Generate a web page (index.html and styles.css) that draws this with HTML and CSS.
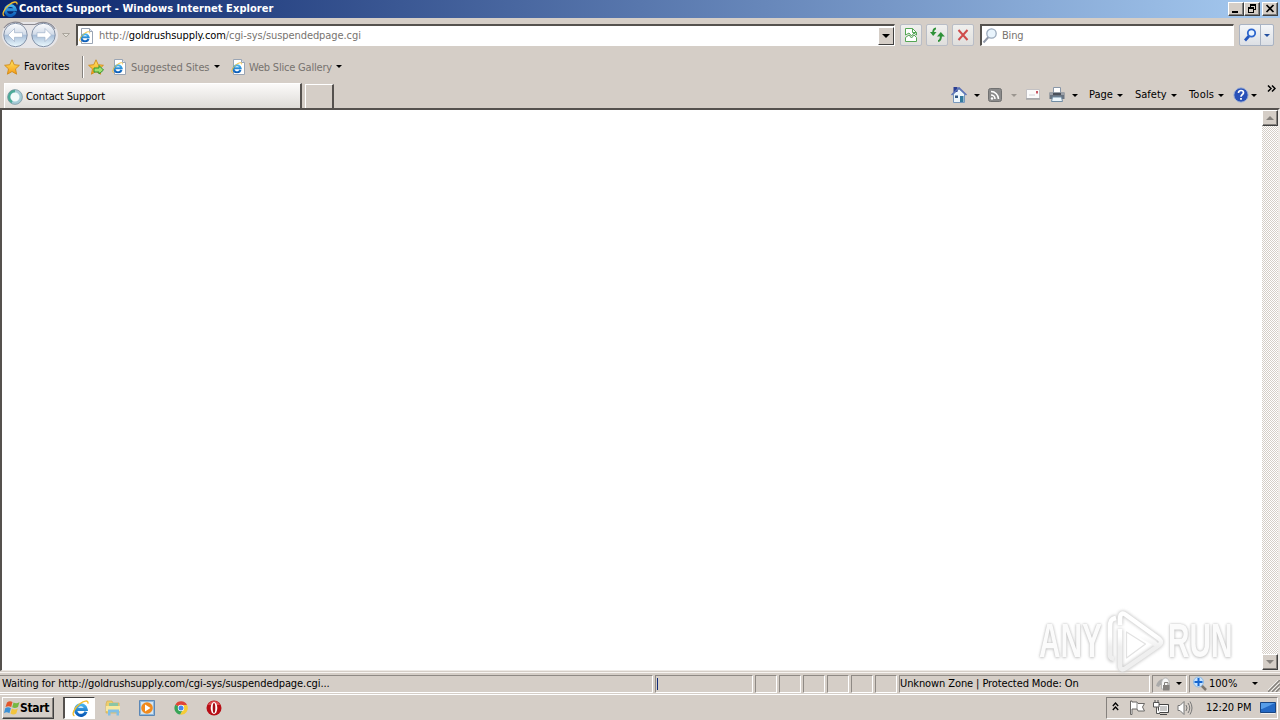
FILE: index.html
```html
<!DOCTYPE html>
<html lang="en">
<head>
<meta charset="utf-8">
<title>Contact Support - Windows Internet Explorer</title>
<link rel="stylesheet" href="styles.css">
</head>
<body>
<svg width="0" height="0" class="defs">
  <defs>
    <linearGradient id="blue" x1="0" y1="0" x2="0" y2="1"><stop offset="0" stop-color="#45b4ee"/><stop offset="1" stop-color="#0c5cb8"/></linearGradient>
    <linearGradient id="orb" x1="0" y1="0" x2="0" y2="1"><stop offset="0" stop-color="#fbfcfe"/><stop offset=".46" stop-color="#d3dce9"/><stop offset=".52" stop-color="#a9bfd9"/><stop offset="1" stop-color="#ecfaff"/></linearGradient>
    <linearGradient id="gold" x1="0" y1="0" x2="0" y2="1"><stop offset="0" stop-color="#ffe765"/><stop offset="1" stop-color="#f79b14"/></linearGradient>
    <linearGradient id="fade" x1="0" y1="0" x2="0" y2="1"><stop offset=".4" stop-color="#fff"/><stop offset=".6" stop-color="#efefef"/></linearGradient>
    <symbol id="e" viewBox="0 0 16 16">
      <path d="M13.200 11A5 5 0 1 1 13.400 8.800H4.500" fill="none" stroke="url(#blue)" stroke-width="2.900"/>
      <path d="M2.300 15C-1 13.500 2.800 7 7.400 3.500 11 .8 15.600-.4 15 3.400" fill="none" stroke="#f3bd2c" stroke-width="1.300"/>
    </symbol>
    <symbol id="iepage" viewBox="0 0 16 16">
      <path d="M3.500.5h8l3 3v12h-11z" fill="#fff" stroke="#9aa5b4"/>
      <path d="M11.500.5v3h3" fill="#dbe5f2" stroke="#9aa5b4"/>
      <svg x="1" y="3" width="11.500" height="11.500"><use href="#e"/></svg>
    </symbol>
    <symbol id="star" viewBox="0 0 16 16"><path d="M8 .8l2.200 4.900 5.200.6-3.900 3.600 1.100 5.300L8 12.500l-4.600 2.700 1.100-5.300L.6 6.300l5.200-.6z" fill="url(#gold)" stroke="#cf8a1a" stroke-width=".9"/></symbol>
  </defs>
</svg>
<div class="screen">
  <header class="titlebar">
    <svg class="title-icon" viewBox="0 0 16 16"><use href="#e"/></svg>
    <span class="title">Contact Support - Windows Internet Explorer</span>
    <div class="winbtns">
      <span class="winbtn"><svg viewBox="0 0 14 12"><path d="M3 8h6v2H3z"/></svg></span>
      <span class="winbtn"><svg viewBox="0 0 14 12"><path d="M5 1h6v6H9V6h1V3H6v1H5zM3 4h6v6H3zM4 6v3h4V6z" fill-rule="evenodd"/></svg></span>
      <span class="winbtn close"><svg viewBox="0 0 14 12"><path d="M3.500 2l7 7M10.500 2l-7 7" stroke="#000" stroke-width="1.700"/></svg></span>
    </div>
  </header>

  <nav class="navbar">
    <svg class="orbs" viewBox="0 0 58 28">
      <path d="M14 1h30a13 13 0 0 1 0 26H14a13 13 0 0 1 0-26z" fill="#e6e5e8"/>
      <path d="M3 7C8 0 17 0 22 3.500h12C41-.5 50 1 54 8" fill="none" stroke="#8b8a92" stroke-width="1.200"/>
      <circle cx="14.500" cy="14" r="11.700" fill="url(#orb)" stroke="#8492a8"/>
      <circle cx="42.500" cy="14" r="11.700" fill="url(#orb)" stroke="#8492a8"/>
      <path d="M7 14l6.500-6.500v4.200h8v4.600h-8v4.200zM50.500 14L44 7.500v4.200h-8v4.600h8v4.200z" fill="#fff" stroke="#a2b3ca" stroke-width=".7"/>
    </svg>
    <svg class="history" viewBox="0 0 8 5"><path d="M.5.5h7L4 4z" fill="#e4e0d8" stroke="#aaa59c"/></svg>
    <div class="address">
      <svg class="i16" viewBox="0 0 16 16"><use href="#iepage"/></svg>
      <span class="url">http://<b>goldrushsupply.com</b>/cgi-sys/suspendedpage.cgi</span>
      <span class="drop"><i class="tri big"></i></span>
    </div>
    <span class="navbtn compat"><svg class="i16" viewBox="0 0 16 16"><path d="M2.500 8V1.500h7l4 4V8l-2.500-2-2.500 3L6 6zM2.500 10.500L6 8l2.500 3L11 8l2.500 2.500v4h-11z" fill="#fff" stroke="#55a655"/><path d="M9.500 1.500v4h4" fill="none" stroke="#55a655"/></svg></span>
    <span class="navbtn refresh"><svg class="i16" viewBox="0 0 16 16"><path d="M7 1.500C4.500 1.500 4 3.500 4 7" fill="none" stroke="#2f9138" stroke-width="1.800"/><path d="M1 5h6.500L4.200 9z" fill="#2f9138"/><path d="M9 14c2.700 0 3-2.500 3-6" fill="none" stroke="#2f9138" stroke-width="2"/><path d="M8 9.500L11.800 5l4 4.500z" fill="#2f9138"/></svg></span>
    <span class="navbtn stop"><svg class="i16" viewBox="0 0 16 16"><path d="M3.500 3l9 10M12.500 3l-9 10" stroke="#cf4b4b" stroke-width="2"/></svg></span>
    <div class="search">
      <svg class="i16" viewBox="0 0 16 16"><path d="M6.500 9L1.500 14.500" stroke="#929aaa" stroke-width="2"/><circle cx="9.500" cy="5.500" r="4.700" fill="#e9f4fc" stroke="#9baabc" stroke-width="1.300"/></svg>
      <span>Bing</span>
    </div>
    <div class="go">
      <span><svg class="i16" viewBox="0 0 16 16"><path d="M7 9l-4 4.500" stroke="#2456bd" stroke-width="2.700"/><circle cx="9.500" cy="6" r="3.700" fill="#e8f3ff" stroke="#2c65cd" stroke-width="1.800"/></svg></span>
      <span><i class="tri blue"></i></span>
    </div>
  </nav>

  <div class="favbar">
    <svg class="i16 favstar" viewBox="0 0 16 16"><use href="#star"/></svg>
    <span class="t-fav">Favorites</span>
    <i class="vsep"></i>
    <svg class="i16 addstar" viewBox="0 0 16 16"><use href="#star"/><path d="M6 9h5V6.500l4.500 4.500-4.500 4V13H6z" fill="#9fe06e" stroke="#319430"/></svg>
    <svg class="i16 ie-a" viewBox="0 0 16 16"><use href="#iepage"/></svg>
    <span class="grey t-sug">Suggested Sites</span><i class="tri"></i>
    <svg class="i16 ie-b" viewBox="0 0 16 16"><use href="#iepage"/></svg>
    <span class="grey t-web">Web Slice Gallery</span><i class="tri"></i>
  </div>

  <div class="tabrow">
    <div class="tab">
      <svg class="i16" viewBox="0 0 16 16"><circle cx="8" cy="8" r="6" fill="#f2fafa" stroke="#a5cbd6" stroke-width="3"/><path d="M8 2A6 6 0 0 0 5 13.200" fill="none" stroke="#4aac98" stroke-width="2.400"/><circle cx="8" cy="8" r="7.400" fill="none" stroke="#78909b" stroke-width=".7"/></svg>
      <span class="t-tab">Contact Support</span>
    </div>
    <div class="newtab"></div>
    <div class="commands">
      <span class="c-home"><svg class="i16" viewBox="0 0 16 16"><path d="M2.500 7v8.500h11V7L8 2z" fill="#edf6fc" stroke="#7898bd"/><path d="M2.500 0h4v5h-4z" fill="#2a3e93"/><path d="M.5 8L8 .8 15.500 8" fill="none" stroke="#5b72b8" stroke-width="1.500"/><path d="M9 9h3.500v6H9z" fill="#337b9f"/><path d="M4 8.500h3V11H4z" fill="#315784"/></svg><i class="tri"></i></span>
      <span class="c-rss"><svg class="i16" viewBox="0 0 16 16"><rect x="1.500" y="1.500" width="13" height="13" rx="2" fill="#8b8b8b" stroke="#717171"/><path d="M4 4.500a7.500 7.500 0 0 1 7.500 7.500M4 8a4 4 0 0 1 4 4" fill="none" stroke="#fff" stroke-width="1.600"/><circle cx="5" cy="11.500" r="1.200" fill="#fff"/></svg><i class="tri dim"></i></span>
      <svg class="i16 c-mail" viewBox="0 0 16 16"><path d="M1.500 2.500h13v9h-13z" fill="#fbfbfb" stroke="#c3c1c3"/><path d="M1 12h14" stroke="#8d9196"/><path d="M11 4h2v2.500h-2z" fill="#c95865"/><path d="M4 8h6" stroke="#d2d2d8"/></svg>
      <span class="c-print"><svg class="i16" viewBox="0 0 16 16"><path d="M4.500.5h7V6h-7z" fill="#fff" stroke="#8997a8"/><path d="M.5 5.500h15V12H.5z" fill="#697481"/><path d="M.5 5.500h15V8H.5z" fill="#9ba0a8"/><path d="M4 6h8v2H4z" fill="#4b515b"/><path d="M3.500 10h9l1 4.500h-11z" fill="#edf7fd" stroke="#718da4"/></svg><i class="tri"></i></span>
      <span class="c-page">Page<i class="tri"></i></span>
      <span class="c-safety">Safety<i class="tri"></i></span>
      <span class="c-tools">Tools<i class="tri"></i></span>
      <span class="c-help"><svg class="i16" viewBox="0 0 16 16"><circle cx="8" cy="8" r="7.200" fill="#2951b8" stroke="#a6b6d5"/><path d="M5.500 6c0-3.500 5-3 5-.3C10.500 7.500 8 7.500 8 9.700" fill="none" stroke="#fff" stroke-width="1.700"/><path d="M7.100 11h1.800v1.700H7.100z" fill="#fff"/></svg><i class="tri"></i></span>
      <svg class="chevrons" viewBox="0 0 9 7"><path d="M1 .5l3 3-3 3M5 .5l3 3-3 3" fill="none" stroke="#000" stroke-width="1.500"/></svg>
    </div>
  </div>

  <main class="view">
    <div class="page"></div>
    <div class="scroll"><span><i class="tri up"></i></span><span><i class="tri down"></i></span></div>
    <div class="watermark">
      <span>ANY</span>
      <svg viewBox="0 0 60 64"><g fill="none" stroke-linejoin="round"><path class="glow" d="M8 51C3 50 4 47 4 42V18c0-6 1-9 6-9M14 20v36c0 5 3 5 6 3l32-22c4-3 4-5 0-8L20 6c-4-3-6-1-6 4v6" stroke="#ccc" stroke-width="6"/><path d="M8 50C3 49 4 46 4 42V18c0-6 1-8 6-9M14 20v36c0 5 3 5 6 3l32-22c4-3 4-5 0-8L20 6c-4-3-6-1-6 4v6M20 18l31 18" stroke="url(#fade)" stroke-width="4.500"/><path d="M20.500 23v26l19-14z" stroke="#e2e2e2" stroke-width="1.200"/></g></svg>
      <span>RUN</span>
    </div>
  </main>

  <div class="status">
    <span class="p0"><span class="t-wait">Waiting for http://goldrushsupply.com/cgi-sys/suspendedpage.cgi...</span></span>
    <span class="p1"><i></i></span>
    <span class="ps"></span><span class="ps"></span><span class="ps"></span><span class="ps"></span><span class="ps"></span><span class="ps"></span>
    <span class="pz"><span class="t-zone">Unknown Zone | Protected Mode: On</span></span>
    <span class="pl"><svg class="i16" viewBox="0 0 16 16"><path d="M0 10c1-4 3-6 6-7l3 1-2 5H4l-1 2z" fill="#aaa"/><path d="M5.500 8c0-8 8-8 8 0v5h-8z" fill="#f6f6f6" stroke="#b5b5b5"/><path d="M7 9h6.500v5.500H7z" fill="#85827f"/><path d="M8.500 9V6.500h3.500V9" fill="none" stroke="#85827f"/></svg><i class="tri"></i></span>
    <span class="px"><svg class="i16" viewBox="0 0 16 16"><path d="M9 9l5 5" stroke="#7e7770" stroke-width="2.500"/><circle cx="6.500" cy="6" r="5" fill="#c7e3ff" stroke="#90bbe3"/><path d="M6.500 2v8M2.500 6h8" stroke="#1666cf" stroke-width="2"/></svg><span class="t-zoom">100%</span><i class="tri"></i><svg class="grip" viewBox="0 0 12 12"><path d="M0 12L12 0M4 12l8-8M8 12l4-4" stroke="#85827d" stroke-width="1.500"/><path d="M-1 11L11-1M3 11l8-8M7 11l4-4" stroke="#fff" stroke-width=".7"/></svg></span>
  </div>

  <footer class="taskbar">
    <div class="start">
      <svg class="i16" viewBox="0 0 16 16"><path d="M3 2.500C5 .8 7 1 8.500 2L7.200 7C5.500 6 3.500 6 1.500 7z" fill="#e2562b"/><path d="M9.500 2.500c2 1.200 4 1 6-.5L14 7c-2 1.300-4 1.300-5.800.3z" fill="#75b843"/><path d="M1.200 8.200c2-1.200 4-1 5.700 0L5.400 13.200c-2-1.200-3.700-1-5.400 0z" fill="#3c91d6"/><path d="M7.900 8.500c2 1.200 3.900 1.200 5.900 0l-1.500 5c-2 1.300-4 1.200-5.800 0z" fill="#f3c43c"/></svg>
      <span class="t-start">Start</span>
    </div>
    <div class="task-ie"><svg viewBox="0 0 16 16"><use href="#e"/></svg></div>
    <svg class="i16 q1" viewBox="0 0 16 16"><path d="M1 4l1-3h5l1 2h6v10H1z" fill="#edce6d" stroke="#d2af55" stroke-width=".7"/><path d="M4 3h9v3H4z" fill="#8bc5a5"/><path d="M1 6h14v5H1z" fill="#f8e8a0"/><path d="M3 15.500V9.500h11v6h-2.500v-3h-6v3z" fill="#80bfe6"/></svg>
    <svg class="i16 q2" viewBox="0 0 16 16"><path d="M.5.5h15v15H.5z" fill="#8eb8dc" stroke="#5b87b6"/><path d="M2 2h12v12H2z" fill="#d6e5f0"/><circle cx="8" cy="8" r="5.800" fill="#f18a1c"/><path d="M6 4.500L11.500 8 6 11.500z" fill="#fff"/></svg>
    <svg class="i16 q3" viewBox="0 0 16 16"><path d="M8 8L2.300 4.700A6.600 6.600 0 0 1 14 5H8z" fill="#df4537"/><path d="M8 8L2.300 4.700a6.600 6.600 0 0 0 4.900 9.900L10.500 9z" fill="#38a456"/><path d="M8 5h6a6.600 6.600 0 0 1-6.800 9.600L10.500 9z" fill="#f5cc35"/><circle cx="8" cy="8" r="3.200" fill="#fff"/><circle cx="8" cy="8" r="2.500" fill="#4488ed"/></svg>
    <svg class="i16 q4" viewBox="0 0 16 16"><circle cx="8" cy="8" r="7.500" fill="#b80e16"/><path d="M2 5a6.500 6.500 0 0 1 12 0z" fill="#dc4b50"/><ellipse cx="8" cy="8" rx="3.300" ry="6" fill="#fff"/><ellipse cx="8" cy="8" rx="1.300" ry="5" fill="#a50d16"/></svg>
    <div class="tray">
      <svg class="expand" viewBox="0 0 7 9"><path d="M.8 4l2.700-3 2.700 3M.8 8l2.700-3 2.700 3" fill="none" stroke="#000" stroke-width="1.300"/></svg>
      <svg class="i16 flag" viewBox="0 0 16 16"><path d="M1.500 1v13.500H3V9h5l1 2h6.500l-2-4 2-3.500H9L8 2H3V1z" fill="#fff" stroke="#6b6967"/><path d="M8 2v7" stroke="#888"/></svg>
      <svg class="i16 net" viewBox="0 0 16 16"><path d="M5.500 4.500h10v8h-10zM7 14.500h7" fill="#c8c8c8" stroke="#444"/><path d="M6.500 5.500h8v6h-8z" fill="none" stroke="#fff"/><path d="M.5 2.500H6V7H.5zM3.500 7v6.500H7M2 2V0M5 2V0" fill="#fff" stroke="#555"/></svg>
      <svg class="i16 vol" viewBox="0 0 16 16"><path d="M1 5.500h2l4-4v13l-4-4H1z" fill="#fff" stroke="#777"/><path d="M9 5q2 3 0 6M11 3q3.500 5 0 10M13 1.500q4 6.500 0 13" fill="none" stroke="#777"/></svg>
      <span class="clock">12:20 PM</span>
      <svg class="i16 desk" viewBox="0 0 16 16"><path d="M.5 2.500h15v10H.5z" fill="#2469c4" stroke="#184684"/><path d="M1 3h14L2 9H1z" fill="#569de8"/><path d="M1 13.500h14" stroke="#f0f0f0"/></svg>
    </div>
  </footer>
</div>
</body>
</html>
```
FILE: styles.css
```css
* { box-sizing: border-box; }
body { margin: 0; overflow: hidden; font-family: "DejaVu Sans Condensed", "DejaVu Sans", sans-serif; font-stretch: condensed; font-size: 11px; line-height: 14px; color: #000; }
.defs { position: absolute; }
.screen { width: 1280px; height: 720px; display: flex; flex-direction: column; background: #d5cec7; white-space: nowrap; }
svg { display: block; flex: none; }
.screen > * { flex: none; }
.screen > * > * { flex-shrink: 0; }
.i16 { width: 16px; height: 16px; }
.tri { display: block; flex: none; width: 0; height: 0; border: solid transparent; border-width: 3px 3px 0; border-top-color: #000; }
.tri.big { border-width: 4px 4px 0; border-top-color: #000; }
.tri.blue { border-top-color: #2450a0; }
.tri.dim { border-top-color: #9b9690; }
.grey { color: #77736f; }

.titlebar { height: 18px; display: flex; align-items: center; background: linear-gradient(90deg, #0a246a, #a6caf0); color: #fff; padding-left: 2px; }
.title-icon { width: 16px; height: 16px; }
.title { margin-left: 1px; font-weight: bold; letter-spacing: .06px; }
.winbtns { display: flex; margin-left: auto; padding-right: 2px; }
.winbtn { width: 16px; height: 14px; padding: 0 1px; background: #d5cec7; border: 1px solid #404040; border-top-color: #fff; border-left-color: #fff; box-shadow: inset -1px -1px #808080; }
.winbtn svg { width: 14px; height: 12px; margin-left: -1px; }
.close { margin-left: 2px; }

.navbar { height: 36px; display: flex; align-items: center; padding: 0 0 2px 1px; }
.orbs { width: 58px; height: 28px; }
.history { width: 8px; height: 5px; margin-left: 3px; }
.address, .search { height: 22px; display: flex; align-items: center; background: #fff; border: 1px solid #fff; border-top: 2px solid #55524e; border-left: 2px solid #55524e; }
.address { width: 819px; margin-left: 6px; }
.url { margin: 1px 0 0 5px; color: #77736f; letter-spacing: -.08px; }
.url b { font-weight: normal; color: #000; }
.drop { width: 16px; height: 18px; display: flex; align-items: center; justify-content: center; margin-left: auto; background: #d5cec7; border: 1px solid #fff; border-right-color: #404040; border-bottom-color: #404040; }
.navbtn { width: 22px; height: 22px; display: flex; align-items: center; justify-content: center; background: linear-gradient(#f0f0ee, #dfdedc); border: 1px solid #b9bdc6; border-radius: 2px; }
.compat { margin-left: 5px; } .refresh { margin-left: 4px; } .stop { margin-left: 4px; }
.search { width: 254px; margin-left: 6px; color: #77736f; }
.search span { margin: 1px 0 0 4px; letter-spacing: -.2px; }
.go { display: flex; height: 22px; margin-left: 5px; background: linear-gradient(#f4f6f9, #dcdfe4); border: 1px solid #a9b3c3; border-radius: 2px; }
.go span { display: flex; align-items: center; justify-content: center; width: 20px; }
.go span + span { width: 13px; border-left: 1px solid #a9b3c3; }

.favbar { height: 28px; display: flex; align-items: center; padding: 0 0 3px 4px; }
.t-fav { width: 46px; margin-left: 4px; letter-spacing: .1px; }
.vsep { width: 2px; height: 22px; margin-left: 12px; border-left: 1px solid #85817d; background: #fff; }
.addstar { margin-left: 4px; }
.ie-a { margin-left: 7px; }
.t-sug { width: 79px; margin: 2px 0 0 4px; letter-spacing: -.1px; }
.t-web { width: 83px; margin: 2px 0 0 3px; letter-spacing: -.2px; }
.favbar .tri { margin-left: 4px; }
.ie-b { margin-left: 10px; }

.tabrow { height: 26px; display: flex; padding-left: 4px; }
.tab { width: 298px; height: 25px; margin-top: 1px; display: flex; align-items: center; padding: 1px 0 0 2px; background: linear-gradient(#fbfaf9, #dedbd7); border: 1px solid #fff; border-right: 2px solid #55514e; border-bottom: 0; }
.t-tab { margin-left: 3px; letter-spacing: -.12px; }
.newtab { width: 29px; height: 24px; margin: 2px 0 0 3px; border: 1px solid #fff; border-right: 2px solid #55514e; border-bottom: 0; }
.commands { height: 26px; display: flex; align-items: center; margin-left: 617px; }
.commands > * { flex: none; }
.commands span { display: flex; align-items: center; }
.c-home { width: 36px; } .c-home .tri { margin-left: 7px; }
.c-rss { width: 38px; } .c-rss .tri { margin-left: 8px; }
.c-mail { margin-right: 8px; }
.c-print { width: 40px; } .c-print .tri { margin-left: 7px; }
.commands .c-page, .commands .c-safety, .commands .c-tools { justify-content: space-between; margin-right: 12px; }
.c-page { width: 34px; } .c-safety { width: 42px; } .c-tools { width: 35px; }
.c-tools { letter-spacing: .2px; }
.commands .c-help { margin-left: -3px; width: 34px; } .c-help .tri { margin-left: 2px; }
.chevrons { width: 9px; height: 7px; margin-top: -13px; }

.view { position: relative; height: 563px; display: flex; border: 2px solid #55514e; border-right: 2px solid #eeeae6; border-bottom: 1px solid #eeeae6; background: #fff; }
.page { flex: 1; }
.scroll { width: 16px; display: flex; flex-direction: column; justify-content: space-between; background: repeating-conic-gradient(#fff 0 25%, #d5cec7 0 50%) 0 0 / 2px 2px; }
.scroll span { height: 16px; display: flex; align-items: center; justify-content: center; background: #d5cec7; border: 1px solid #404040; border-top-color: #fff; border-left-color: #fff; box-shadow: inset -1px -1px #85817d; }
.tri.up { border-width: 0 4px 4px; border-bottom-color: #85817d; }
.tri.down { border-width: 4px 4px 0; border-top-color: #85817d; }
.watermark { position: absolute; left: 1037px; top: 498px; display: flex; align-items: center; height: 66px; color: #fbfbfb; font: bold 48px/50px "Liberation Sans", sans-serif; text-shadow: 0 0 3px #bbb, 0 1px 4px #d0d0d0; }
.watermark svg { width: 60px; height: 64px; margin-left: 1px; overflow: visible; }
.glow { filter: blur(1.5px); }
.watermark span { width: 66px; transform-origin: 0 50%; transform: scaleX(.62); }
.watermark svg + span { margin-left: 2px; }

.status { height: 24px; display: flex; align-items: center; gap: 2px; border-bottom: 1px solid #fff; box-shadow: inset 0 1px #d5cec7, inset 0 2px #f7f4f1; padding-top: 2px; }
.status > span { height: 18px; display: flex; align-items: center; border: 1px solid #fff; border-top-color: #8f8a85; border-left-color: #8f8a85; }
.status .p0 { width: 653px; border-left: 0; padding-left: 2px; }
.t-wait { letter-spacing: -.07px; }
.p1 { width: 98px; padding-left: 1px; } .p1 i { width: 1px; height: 12px; background: #122c7b; }
.ps { width: 22px; }
.status .pz { width: 251px; padding-left: 0; }
.t-zone { letter-spacing: -.1px; }
.pl { width: 35px; padding-left: 3px; } .pl .tri { margin-left: 4px; }
.px { width: 93px; padding-left: 2px; } .px .tri { margin-left: 14px; }
.t-zoom { width: 29px; margin-left: 1px; }
.grip { width: 12px; height: 12px; margin: 5px 0 0 10px; }

.taskbar { height: 25px; display: flex; align-items: center; padding-left: 2px; }
.start { width: 52px; height: 22px; display: flex; align-items: center; padding-left: 1px; border: 1px solid #404040; border-top-color: #fff; border-left-color: #fff; box-shadow: inset -1px -1px #85817d; }
.t-start { font-size: 12px; font-weight: bold; letter-spacing: -.35px; }
.task-ie { width: 32px; height: 22px; margin-left: 9px; padding: 2px 0 0 7px; background: #fff; border: 1px solid #fff; border-top-color: #404040; border-left: 2px solid #55514e; }
.task-ie svg { width: 17px; height: 17px; }
.q1 { margin-left: 10px; } .q2, .q3 { margin-left: 18px; } .q4 { margin-left: 17px; }
.tray { width: 172px; height: 22px; display: flex; align-items: center; margin-left: auto; margin-right: 2px; border: 1px solid #fff; border-top-color: #85817d; border-left-color: #85817d; }
.expand { width: 7px; height: 9px; margin: -3px 0 0 5px; }
.flag { margin-left: 10px; } .net { margin-left: 8px; } .vol { margin-left: 8px; }
.clock { width: 46px; margin-left: 13px; letter-spacing: -.1px; }
.desk { margin-left: 8px; }
```
